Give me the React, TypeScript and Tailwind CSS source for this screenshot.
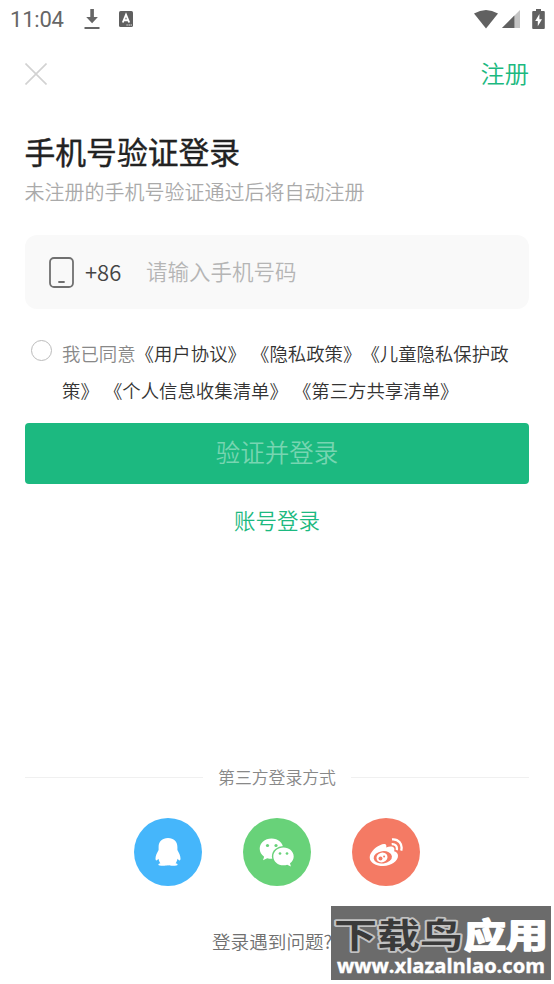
import React from "react";

const agreements = [
  "《用户协议》 ",
  "《隐私政策》",
  "《儿童隐私保护政策》 ",
  "《个人信息收集清单》 ",
  "《第三方共享清单》",
];

const StatusBar = () => (
  <div className="flex h-[38px] items-center justify-between pl-[10px] pr-[9px] text-[#666]">
    <div className="flex items-center">
      <span className="w-[74px] pt-[2px] font-['Roboto',sans-serif] text-[22px] leading-[36px] tracking-[-0.2px]">
        11:04
      </span>
      <svg width="16" height="22" viewBox="0 0 16 22" fill="currentColor">
        <path d="M6.3 1h3.6v8h4L8.1 15.2 2.2 9h4.1z" />
        <path d="M.5 19h15v2H.5z" />
      </svg>
      <svg className="ml-[18px]" width="16" height="16" viewBox="0 0 16 16">
        <rect x="1" y="0" width="14" height="16" rx="1.6" fill="#5f5f5f" />
        <path d="M4.8 11.5 8 3.7 11.2 11.5M6 9.2h4" fill="none" stroke="#fff" strokeWidth="1.9" />
        <path d="M8.5 14h1.2M10.6 14h1.2M12.6 14h1.2" stroke="#fff" strokeWidth="1" />
      </svg>
    </div>
    <div className="flex items-center">
      <svg width="24" height="19" viewBox="0 0 24 19" fill="#616161">
        <path d="M0 3.6Q12-3.6 24 3.6L12 18.6z" />
      </svg>
      <svg className="ml-1" width="18" height="18" viewBox="0 0 18 18">
        <path d="M18 0v18H0z" fill="#c4c4c4" />
        <path d="M12.4 5.6V18H0z" fill="#616161" />
      </svg>
      <svg className="ml-3" width="13" height="20" viewBox="0 0 13 20">
        <path d="M4 0h5v2h2.8q1 0 1 1v16q0 1-1 1H1.2q-1 0-1-1V3q0-1 1-1H4z" fill="#616161" />
        <path d="M7.4 5 3.2 12h2.6v5.3L10 10.2H7.4z" fill="#fff" />
      </svg>
    </div>
  </div>
);

const Watermark = () => (
  <div className="absolute left-[331px] top-[906px] h-[74px] w-[220px] bg-[#6b6b6b]">
    <svg className="overflow-visible" width="220" height="74" viewBox="0 0 220 74">
      <g
        className="font-['Noto_Sans_CJK_SC',sans-serif] font-bold"
        fontSize="34"
        strokeLinejoin="round"
        paintOrder="stroke"
      >
        <text x="3" y="42" textLength="129" lengthAdjust="spacingAndGlyphs" fill="#3a3a3a" stroke="#c2c2c2" strokeWidth="3.5">
          下载鸟
        </text>
        <text x="133" y="42" textLength="84" lengthAdjust="spacingAndGlyphs" fill="#fff" stroke="#fff" strokeWidth="1.8">
          应用
        </text>
      </g>
      <text
        className="font-['Open_Sans',sans-serif] font-bold"
        x="6"
        y="67"
        fontSize="19"
        textLength="208"
        lengthAdjust="spacingAndGlyphs"
        fill="#fff"
        stroke="#fff"
        strokeWidth="0.4"
      >
        www.xlazalnlao.com
      </text>
    </svg>
  </div>
);

const ThirdPartyLogin = () => (
  <div className="flex justify-center gap-[41px]">
    <button className="flex size-[68px] items-center justify-center rounded-full bg-[#45b6fb]">
      <svg width="26" height="28" viewBox="0 0 26 28" fill="#fff">
        <path d="M13 0C7.2 0 3.6 3.6 3.6 9v3C2 14.800.5 17.800.5 20.400c0 1.200.4 2 .9 2 .8 0 1.500-.8 2.100-1.600.3 1.700.8 3.100 1.900 4.400-1.300.2-2 .6-2 1.300 0 1.100 2 1.300 4.500 1.300 2 0 4.200-.2 5.100-.5.9.3 3.100.5 5.100.5 2.500 0 4.500-.2 4.500-1.300 0-.7-.7-1.100-2-1.300 1.100-1.300 1.600-2.700 1.900-4.400.6.8 1.300 1.600 2.100 1.600.5 0 .9-.8.9-2 0-2.600-1.500-5.600-3.100-8.400V9c0-5.400-3.600-9-9.400-9z" />
      </svg>
    </button>
    <button className="flex size-[68px] items-center justify-center rounded-full bg-[#68d279]">
      <svg width="36" height="29" viewBox="0 0 36 29">
        <path d="M12.500.5C5.800.5.7 5 .7 10.800c0 3.300 1.700 6 4.400 7.900L4 22.300l4.200-2.100c1.400.4 2.800.6 4.300.6 6.600 0 11.800-4.400 11.800-10S19.100.5 12.500.5z" fill="#fff" />
        <ellipse cx="24.500" cy="18.300" rx="11.600" ry="10.300" fill="#68d279" />
        <path d="M24.500 9.500c-5.700 0-10.200 3.900-10.200 8.900s4.500 8.900 10.200 8.900c1.300 0 2.600-.2 3.700-.6l3.700 1.900-.9-3.300c2.300-1.700 3.700-4.100 3.700-6.900 0-5-4.500-8.900-10.200-8.900z" fill="#fff" />
        <g fill="#68d279">
          <circle cx="8.500" cy="7.500" r="1.600" />
          <circle cx="17" cy="7.500" r="1.600" />
          <circle cx="21" cy="15.500" r="1.350" />
          <circle cx="28" cy="15.500" r="1.350" />
        </g>
      </svg>
    </button>
    <button className="flex size-[68px] items-center justify-center rounded-full bg-[#f47a64]">
      <svg width="34" height="29" viewBox="0 0 34 29">
        <path d="M11 7.200c3-1.700 5.800-1.700 6.300.2.200.7 0 1.400-.1 2 3.300-1.300 6.600-1.200 7.700.4.700 1 .6 2.200.2 3.500 2 .6 3.900 2 3.900 4.500 0 5.300-6.500 10.200-14.700 10.200C7 28 .7 24.800.7 19.400c0-4.200 4.500-9.700 10.300-12.200z" fill="#fff" />
        <ellipse cx="13.800" cy="19.300" rx="9.200" ry="6.200" transform="rotate(-7 13.800 19.300)" fill="#f47a64" />
        <ellipse cx="13" cy="19.500" rx="5.600" ry="4.800" transform="rotate(-18 13 19.500)" fill="#fff" />
        <circle cx="11.500" cy="20.600" r="2" fill="#f47a64" />
        <circle cx="15.100" cy="18.400" r="1" fill="#f47a64" />
        <path d="M22.700 6.100c3.500-.4 6 2.200 5 6M23 1.400c6.400-.7 11 4.600 9.200 11.200" fill="none" stroke="#fff" strokeWidth="2.300" />
      </svg>
    </button>
  </div>
);

const App = () => {
  return (
    <div className="relative flex h-[984px] w-[554px] flex-col overflow-hidden bg-white font-['Noto_Sans_CJK_SC',sans-serif]">
      <StatusBar />
      <div className="flex h-[72px] items-center justify-between px-[25px]">
        <svg width="22" height="22" viewBox="0 0 22 22" stroke="#d2d2d2" strokeWidth="1.6">
          <path d="M.5.5l21 21M21.5.5l-21 21" />
        </svg>
        <span className="pb-[2px] text-[24.3px] font-[350] text-[#1cb980]">注册</span>
      </div>

      <h1 className="mt-[18px] pl-[24.5px] text-[30.8px] leading-[46px] text-[#222] [-webkit-text-stroke:0.4px_#222]">
        手机号验证登录
      </h1>
      <p className="mt-[2px] pl-[24.5px] text-[20px] font-[350] leading-[32px] text-[#aaa]">
        未注册的手机号验证通过后将自动注册
      </p>

      <div className="mx-[25px] mt-[27px] flex h-[74px] shrink-0 items-center rounded-[12px] bg-[#f9f9f9] pl-[24px]">
        <svg width="25" height="31" viewBox="0 0 25 31" fill="none" stroke="#707070" strokeWidth="1.8" strokeLinecap="round">
          <rect x="1" y="1" width="23" height="29" rx="4" />
          <path d="M10 25h5" />
        </svg>
        <span className="ml-[11px] w-[61px] pb-[2px] text-[22px] font-[350] text-[#444]">+86</span>
        <span className="pb-px text-[21.5px] font-[350] text-[#b5b5b5]">请输入手机号码</span>
      </div>

      <div className="mt-[26px] flex h-[74px] pl-[31px]">
        <span className="mt-[5px] size-[21px] shrink-0 rounded-full border border-[#bbb]" />
        <p className="ml-[10px] w-[456px] text-[18.4px] font-[350] leading-[37px] text-[#333] [text-spacing-trim:space-all] [word-break:break-all] [word-spacing:1px]">
          <span className="text-[#888]">我已同意</span>
          {agreements.map((name) => (
            <span key={name}>{name}</span>
          ))}
        </p>
      </div>

      <button className="mx-[25px] mt-[14px] h-[61px] shrink-0 rounded-[4px] bg-[#1cb980] pb-[2px] text-[24.5px] font-[350] text-[#77d5b1]">
        验证并登录
      </button>
      <div className="mt-[20px] text-center text-[21.5px] font-[350] leading-[32px] text-[#1cb980]">
        账号登录
      </div>

      <div className="mx-[25px] mt-[228px] flex items-center">
        <div className="h-px flex-1 bg-[#f0f0f0]" />
        <span className="mx-[15px] text-[16.85px] font-[350] leading-[26px] text-[#888]">
          第三方登录方式
        </span>
        <div className="h-px flex-1 bg-[#f0f0f0]" />
      </div>
      <div className="mt-[28px]">
        <ThirdPartyLogin />
      </div>
      <div className="mt-[41px] pl-[212px] text-[18.6px] font-[350] leading-[28px] text-[#707070]">
        登录遇到问题?
      </div>
      <Watermark />
    </div>
  );
};

export default App;
